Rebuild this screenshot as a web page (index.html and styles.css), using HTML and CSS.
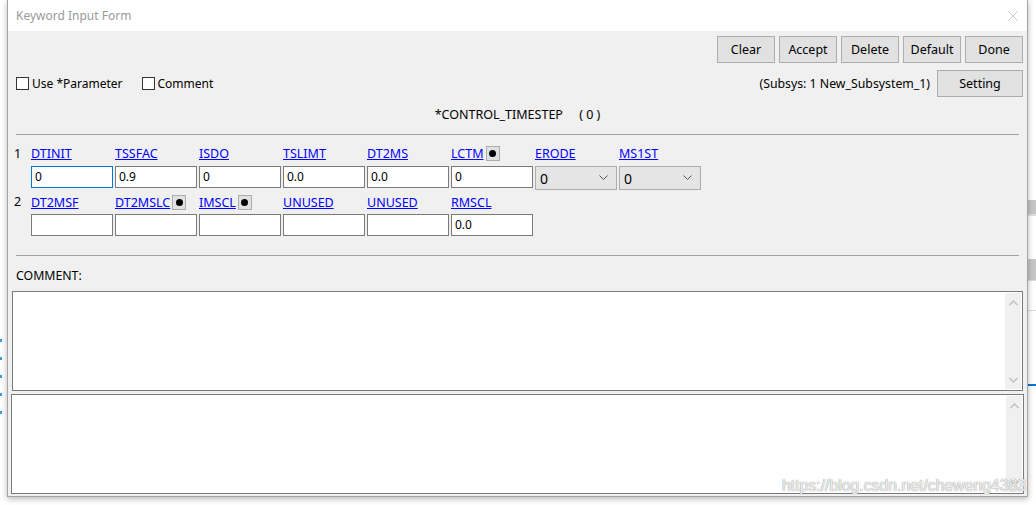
FILE: index.html
```html
<!DOCTYPE html>
<html>
<head>
<meta charset="utf-8">
<link rel="stylesheet" href="styles.css">
</head>
<body>
<div class="gutter-left">
  <span class="bdot"></span><span class="bdot"></span><span class="bdot"></span><span class="bdot"></span><span class="bdot"></span>
</div>
<div class="window">
  <div class="titlebar">
    <span class="title">Keyword Input Form</span>
    <svg class="close" width="10" height="10" viewBox="0 0 10 10"><path d="M0.5 0.5L9.5 9.5M9.5 0.5L0.5 9.5" stroke="#c8c8c8" stroke-width="1" fill="none"/></svg>
  </div>
  <div class="panel">
    <div class="toolbar">
      <div class="btn">Clear</div>
      <div class="btn">Accept</div>
      <div class="btn">Delete</div>
      <div class="btn">Default</div>
      <div class="btn">Done</div>
    </div>
    <div class="optrow">
      <div class="checks">
        <label class="chk"><span class="box"></span>Use *Parameter</label>
        <label class="chk"><span class="box"></span>Comment</label>
      </div>
      <div class="subsys">
        <span>(Subsys: 1 New_Subsystem_1)</span>
        <div class="btn btn-wide">Setting</div>
      </div>
    </div>
    <div class="heading">*CONTROL_TIMESTEP     ( 0 )</div>
    <div class="sep"></div>
    <div class="fields">
      <div class="frow">
        <div class="num">1</div>
        <div class="cell"><div class="lab"><a>DTINIT</a></div><div class="inp focus">0</div></div>
        <div class="cell"><div class="lab"><a>TSSFAC</a></div><div class="inp">0.9</div></div>
        <div class="cell"><div class="lab"><a>ISDO</a></div><div class="inp">0</div></div>
        <div class="cell"><div class="lab"><a>TSLIMT</a></div><div class="inp">0.0</div></div>
        <div class="cell"><div class="lab"><a>DT2MS</a></div><div class="inp">0.0</div></div>
        <div class="cell"><div class="lab"><a>LCTM</a><span class="dotbtn"><i></i></span></div><div class="inp">0</div></div>
        <div class="cell"><div class="lab"><a>ERODE</a></div><div class="sel"><span>0</span><svg width="9" height="6" viewBox="0 0 9 6"><path d="M0.5 0.5L4.5 4.5L8.5 0.5" stroke="#555" fill="none"/></svg></div></div>
        <div class="cell"><div class="lab"><a>MS1ST</a></div><div class="sel"><span>0</span><svg width="9" height="6" viewBox="0 0 9 6"><path d="M0.5 0.5L4.5 4.5L8.5 0.5" stroke="#555" fill="none"/></svg></div></div>
      </div>
      <div class="frow">
        <div class="num">2</div>
        <div class="cell"><div class="lab"><a>DT2MSF</a></div><div class="inp"></div></div>
        <div class="cell"><div class="lab"><a>DT2MSLC</a><span class="dotbtn"><i></i></span></div><div class="inp"></div></div>
        <div class="cell"><div class="lab"><a>IMSCL</a><span class="dotbtn"><i></i></span></div><div class="inp"></div></div>
        <div class="cell"><div class="lab"><a>UNUSED</a></div><div class="inp"></div></div>
        <div class="cell"><div class="lab"><a>UNUSED</a></div><div class="inp"></div></div>
        <div class="cell"><div class="lab"><a>RMSCL</a></div><div class="inp">0.0</div></div>
      </div>
    </div>
    <div class="sep sep2"></div>
    <div class="comment-label">COMMENT:</div>
    <div class="tarea ta1">
      <div class="tbody"></div>
      <div class="sbar">
        <svg width="9" height="6" viewBox="0 0 9 6"><path d="M0.5 5L4.5 1L8.5 5" stroke="#c0c0c0" stroke-width="1.4" fill="none"/></svg>
        <svg width="9" height="6" viewBox="0 0 9 6"><path d="M0.5 1L4.5 5L8.5 1" stroke="#c0c0c0" stroke-width="1.4" fill="none"/></svg>
      </div>
    </div>
    <div class="tarea ta2">
      <div class="tbody"></div>
      <div class="sbar">
        <svg width="9" height="6" viewBox="0 0 9 6"><path d="M0.5 5L4.5 1L8.5 5" stroke="#c0c0c0" stroke-width="1.4" fill="none"/></svg>
        <svg width="9" height="6" viewBox="0 0 9 6"><path d="M0.5 1L4.5 5L8.5 1" stroke="#c0c0c0" stroke-width="1.4" fill="none"/></svg>
      </div>
    </div>
  </div>
  <div class="watermark">https://blog.csdn.net/cheweng4383</div>
</div>
<div class="gutter-right">
  <div class="gr-gap1"></div>
  <div class="gr-band"></div>
  <div class="gr-light"></div>
  <div class="gr-gap2"></div>
  <div class="gr-band2"></div>
  <div class="gr-text"></div>
  <div class="gr-text"></div>
  <div class="gr-blue"></div>
</div>
</body>
</html>
```

FILE: styles.css
```css
* { box-sizing: border-box; }
html, body { margin: 0; padding: 0; }
body {
  width: 1036px;
  height: 505px;
  overflow: hidden;
  background: #ffffff;
  display: flex;
  align-items: flex-start;
  font-family: "Noto Sans", "Open Sans", sans-serif;
  font-size: 12px;
  color: #000;
}
.gutter-left {
  width: 7px;
  flex: none;
  display: flex;
  flex-direction: column;
  gap: 15px;
  padding-top: 339px;
}
.bdot { display: block; width: 2px; height: 3px; background: #3d9ad6; }
.window {
  position: relative;
  width: 1021px;
  height: 497px;
  flex: none;
  border: 1px solid #a3a3a3;
  border-top: none;
  background: #f0f0f0;
  box-shadow: 0 2px 6px rgba(0,0,0,0.28);
  z-index: 1;
}
.titlebar {
  height: 31px;
  background: #ffffff;
  display: flex;
  align-items: center;
  justify-content: space-between;
  padding: 0 9px 0 8px;
}
.title { color: #9a9a9a; font-size: 12px; }
.close { display: block; margin-top: 1px; }
.panel { background: #f0f0f0; }
.toolbar {
  display: flex;
  justify-content: flex-end;
  gap: 4px;
  padding: 5px 4px 0 0;
}
.btn {
  width: 58px;
  height: 27px;
  background: #e1e1e1;
  border: 1px solid #adadad;
  display: flex;
  align-items: center;
  justify-content: center;
  font-size: 12.5px;
}
.btn-wide { width: 86px; }
.optrow {
  display: flex;
  justify-content: space-between;
  align-items: center;
  height: 27px;
  margin-top: 7px;
  padding: 0 4px 0 8px;
}
.checks { display: flex; gap: 19px; }
.chk { display: flex; align-items: center; gap: 3px; font-size: 12px; }
.box { width: 13px; height: 13px; border: 1px solid #333; background: #fff; display: block; }
.subsys { display: flex; align-items: center; gap: 7px; font-size: 12.3px; }
.heading {
  height: 35px;
  line-height: 36px;
  text-align: center;
  white-space: pre;
  font-size: 12.5px;
}
.sep {
  height: 1px;
  background: #a0a0a0;
  margin: 2px 8px 0 8px;
}
.fields { padding: 10px 0 0 6px; }
.frow { display: flex; height: 48px; }
.frow + .frow .lab { margin-top: 1px; height: 16px; }
.num { width: 17px; height: 17px; line-height: 17px; font-size: 12.5px; }
.cell { width: 82px; margin-right: 2px; }
.lab {
  height: 17px;
  display: flex;
  align-items: center;
  gap: 2px;
}
.lab a { color: #0000ff; text-decoration: underline; font-size: 12.5px; line-height: 17px; }
.dotbtn {
  width: 14px;
  height: 15px;
  background: #e1e1e1;
  border: 1px solid #adadad;
  display: flex;
  align-items: center;
  justify-content: center;
}
.dotbtn i { display: block; width: 7px; height: 7px; border-radius: 50%; background: #000; }
.inp {
  margin-top: 4px;
  height: 22px;
  background: #fff;
  border: 1px solid #7a7a7a;
  padding: 0 3px;
  line-height: 20px;
  font-size: 12px;
}
.inp.focus { border-color: #0078d7; }
.sel {
  margin-top: 4px;
  height: 24px;
  background: #e5e5e5;
  border: 1px solid #adadad;
  display: flex;
  align-items: center;
  justify-content: space-between;
  padding: 0 8px 0 4px;
  font-size: 14px;
}
.sel svg { display: block; }
.sep2 { margin-top: 14px; }
.comment-label {
  margin: 11px 0 0 8px;
  height: 18px;
  line-height: 18px;
  font-size: 12.3px;
}
.tarea {
  height: 100px;
  background: #fff;
  border: 1px solid #7a7a7a;
  display: flex;
  padding: 1px;
}
.ta1 { margin: 6px 4px 0 4px; }
.ta2 { margin: 3px 3px 0 3px; }
.tbody { flex: 1; }
.sbar {
  width: 16px;
  background: #f0f0f0;
  display: flex;
  flex-direction: column;
  justify-content: space-between;
  align-items: center;
  padding: 7px 0 6px;
}
.sbar svg { display: block; }
.watermark {
  position: absolute;
  left: 774px;
  top: 477px;
  font-family: "Liberation Sans", Arial, sans-serif;
  font-size: 15.8px;
  color: rgba(255,255,255,0.85);
  text-shadow: 0 0 1px #9a9a9a, 0 0 1px #9a9a9a;
  white-space: nowrap;
}
.gutter-right { flex: 1; display: flex; flex-direction: column; }
.gr-gap1 { height: 200px; }
.gr-band { height: 14px; background: #c6c6c6; }
.gr-light { height: 2px; background: #dedede; }
.gr-gap2 { height: 43px; }
.gr-band2 { height: 21px; background: #c6c6c6; }
.gr-text { height: 30px; border-top: 1px solid #dcdcdc; }
.gr-blue { margin-top: 44px; height: 2px; background: #0078d7; }
```
